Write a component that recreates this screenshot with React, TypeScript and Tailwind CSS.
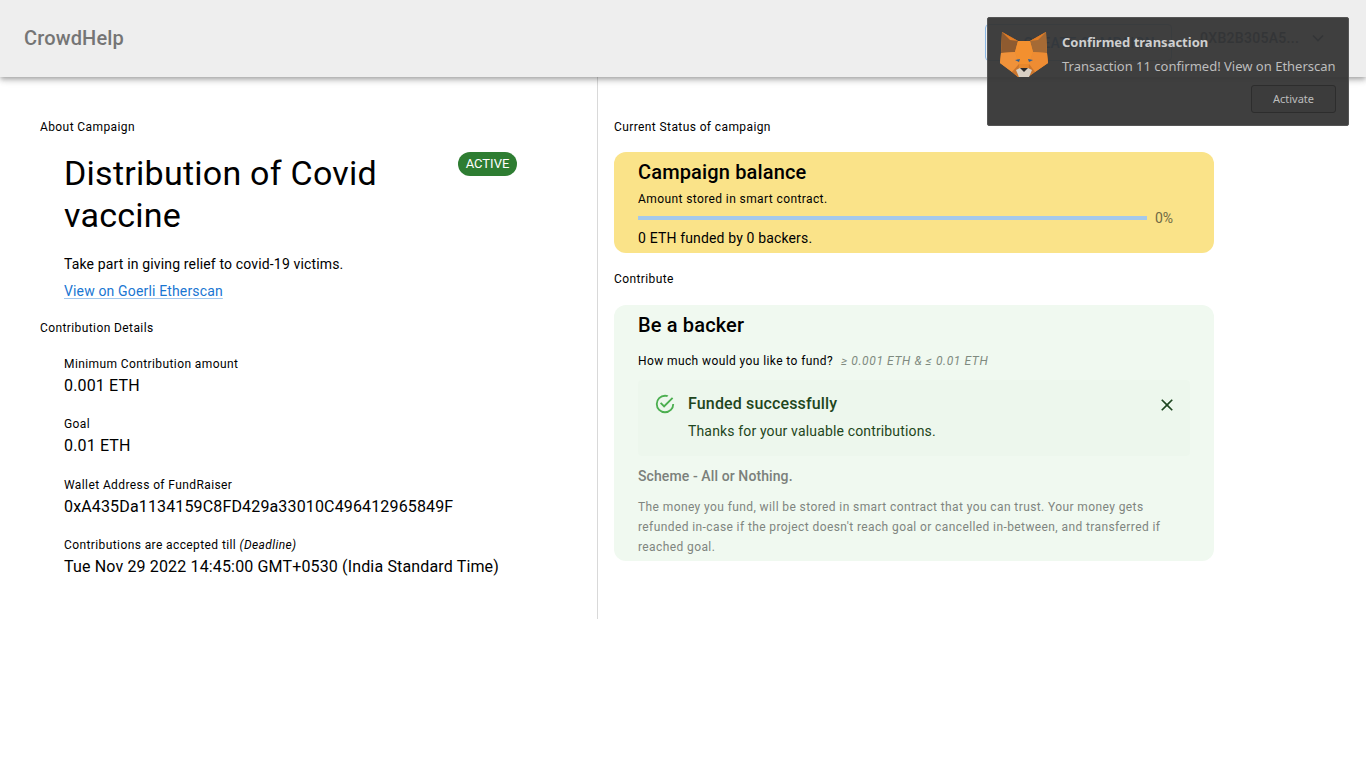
import React from "react";

const Fox = () => (
  <svg width="48" height="47" viewBox="0 0 48 47" className="block">
    <polygon points="2,1 18,10 30,10 46,1 47,22 48,32 35,41 28,46 18,46 12,41 0,32 1,22" fill="#e8882c" />
    <polygon points="2,1 18,10 15,21 1,22" fill="#8f5b30" />
    <polygon points="46,1 30,10 33,21 47,22" fill="#a56a35" />
    <polygon points="2,1 18,10 10,9" fill="#e27d25" />
    <polygon points="46,1 30,10 38,9" fill="#e27d25" />
    <polygon points="18,10 30,10 33,21 29,33 19,33 15,21" fill="#f3902f" />
    <polygon points="1,22 15,21 19,33 12,41 0,32" fill="#f0923a" />
    <polygon points="47,22 33,21 29,33 35,41 48,32" fill="#ee8c33" />
    <polygon points="12,41 19,33 18,46" fill="#c9752e" />
    <polygon points="35,41 29,33 28,46" fill="#c9752e" />
    <polygon points="16,39 20,37 28,37 32,39 29,46 19,46" fill="#d8cfc4" />
    <polygon points="20,37 28,37 24,41" fill="#2a2a2a" />
    <polygon points="15,29 20,28 19,31" fill="#2f5f93" />
    <polygon points="33,29 28,28 29,31" fill="#2f5f93" />
  </svg>
);

function Field({ label, value }: { label: React.ReactNode; value: string }) {
  return (
    <div className="h-[60.5px] pt-[5px]">
      <div className="text-xs leading-[20px] tracking-[0.4px] text-black">{label}</div>
      <div className="text-base leading-[24px] tracking-[0.15px] text-black">{value}</div>
    </div>
  );
}

export default function App() {
  return (
    <div className="relative min-h-[768px] bg-white text-black font-['Roboto',sans-serif]">
      <header className="relative z-10 flex h-[77px] items-center bg-[#eeeeee] pl-6 pr-[40px] shadow-[0_2px_4px_-1px_rgba(0,0,0,0.2),0_4px_5px_0_rgba(0,0,0,0.14),0_1px_10px_0_rgba(0,0,0,0.12)]">
        <div className="-mt-[2px] text-xl font-medium leading-[32px] tracking-[0.15px] text-[#757575]">CrowdHelp</div>
        <div className="ml-auto flex items-center">
          <div className="mt-[8px] flex h-[37px] w-[187px] shrink-0 items-center justify-end gap-2 rounded border border-[#8ab8e6] pr-4 text-sm font-medium tracking-[0.4px] text-[#1976d2]">
            <span className="text-lg leading-none">+</span>
            <span>CREATE CAMPAIGN</span>
          </div>
          <div className="-mt-[1px] ml-[28px] flex w-[126px] shrink-0 items-center justify-between whitespace-nowrap text-sm font-medium tracking-[0.3px] text-[#1d3a5c]">
            <span>0XB2B305A5...</span>
            <svg width="20" height="20" viewBox="0 0 24 24" fill="none" stroke="currentColor" strokeWidth="2" className="-mr-[2px] shrink-0"><path d="M6 9l6 6 6-6" /></svg>
          </div>
        </div>
      </header>

      <main className="flex items-start">
        <section className="h-[542px] w-[598px] border-r border-[#d9d9d9] pl-10 pt-[40px]">
          <div className="text-xs leading-[20px] tracking-[0.4px]">About Campaign</div>
          <div className="pl-6">
            <div className="mt-[15px] flex items-start">
              <h1 className="w-[394px] text-[34px] font-normal leading-[42px] tracking-[0.25px]">Distribution of Covid vaccine</h1>
              <span className="flex h-6 w-[59px] items-center justify-center rounded-full bg-[#2e7d32] text-[13px] text-white">ACTIVE</span>
            </div>
            <p className="mt-[17px] text-sm leading-[22px] tracking-[0.15px]">Take part in giving relief to covid-19 victims.</p>
            <a className="mt-[5px] block w-fit text-sm leading-[22px] tracking-[0.15px] text-[#1976d2] underline decoration-[#1976d2]/40 underline-offset-2">View on Goerli Etherscan</a>
          </div>
          <div className="mt-[16px] text-xs leading-[20px] tracking-[0.4px]">Contribution Details</div>
          <div className="mt-[10.6px] pl-6">
            <Field label="Minimum Contribution amount" value="0.001 ETH" />
            <Field label="Goal" value="0.01 ETH" />
            <Field label="Wallet Address of FundRaiser" value="0xA435Da1134159C8FD429a33010C496412965849F" />
            <Field label={<>Contributions are accepted till <i>(Deadline)</i></>} value="Tue Nov 29 2022 14:45:00 GMT+0530 (India Standard Time)" />
          </div>
        </section>

        <section className="pl-4 pt-[40px]">
          <div className="text-xs leading-[20px] tracking-[0.4px]">Current Status of campaign</div>
          <div className="mt-[15px] h-[101px] w-[600px] rounded-[12px] bg-[#fae389] px-6">
            <h2 className="h-[37px] text-xl font-medium leading-[40px] tracking-[0.15px]">Campaign balance</h2>
            <div className="text-xs leading-[20px] tracking-[0.4px]">Amount stored in smart contract.</div>
            <div className="flex h-[18px] items-center">
              <div className="h-1 w-[509px] bg-[#a5c9ea]" />
              <span className="ml-2 text-sm text-[#6f6a45]">0%</span>
            </div>
            <div className="mt-[1px] text-sm leading-[20px] tracking-[0.15px]">0 ETH funded by 0 backers.</div>
          </div>
          <div className="mt-[16px] text-xs leading-[20px] tracking-[0.4px]">Contribute</div>
          <div className="mt-[16px] h-[256px] w-[600px] overflow-hidden rounded-[12px] bg-[#f0f9f0] px-6">
            <h2 className="text-xl font-medium leading-[40px] tracking-[0.15px]">Be a backer</h2>
            <div className="mt-[6px] flex items-center text-xs leading-[20px] tracking-[0.4px]">
              How much would you like to fund?
              <i className="ml-2 tracking-[0.6px] text-[#7f8a7f]">≥ 0.001 ETH &amp; ≤ 0.01 ETH</i>
            </div>
            <div className="mt-[9px] flex h-[76px] w-[552px] rounded bg-[#edf7ed] pl-4 pr-[13px] text-[#1e4620]">
              <svg width="22" height="22" viewBox="0 0 24 24" className="mt-[13px] text-[#4caf50]" fill="currentColor">
                <path d="M20 12a8 8 0 0 1-8 8 8 8 0 0 1-8-8 8 8 0 0 1 8-8c.76 0 1.5.11 2.2.31l1.57-1.57A9.9 9.9 0 0 0 12 2 10 10 0 0 0 2 12a10 10 0 0 0 10 10 10 10 0 0 0 10-10M7.91 10.08 6.5 11.5 11 16 21 6l-1.41-1.42L11 13.17z" />
              </svg>
              <div className="ml-[12px] flex-1">
                <div className="mt-[13px] text-base font-medium leading-[22px] tracking-[0.15px]">Funded successfully</div>
                <div className="mt-[5px] text-sm leading-[22px] tracking-[0.15px]">Thanks for your valuable contributions.</div>
              </div>
              <svg width="20" height="20" viewBox="0 0 24 24" className="mt-[15px]" fill="currentColor">
                <path d="M19 6.41 17.59 5 12 10.59 6.41 5 5 6.41 10.59 12 5 17.59 6.41 19 12 13.41 17.59 19 19 17.59 13.41 12z" />
              </svg>
            </div>
            <div className="mt-[9px] text-sm font-medium leading-[22px] tracking-[0.1px] text-[#7b807b]">Scheme - All or Nothing.</div>
            <p className="mt-[10px] w-[540px] text-xs leading-[20px] tracking-[0.4px] text-[#7f857f]">
              The money you fund, will be stored in smart contract that you can trust. Your money gets refunded in-case if the project doesn't reach goal or cancelled in-between, and transferred if reached goal.
            </p>
          </div>
        </section>
      </main>

      <div className="absolute left-[987px] top-[17px] z-20 h-[109px] w-[362px] rounded-[2px] border border-[#555555] bg-[#353535]/95 font-['Noto_Sans',sans-serif]">
        <div className="absolute left-[12px] top-[13px]"><Fox /></div>
        <div className="absolute left-[74px] top-[14px] whitespace-nowrap text-[13px] font-bold leading-[20px] text-[#cfcfcf]">Confirmed transaction</div>
        <div className="absolute left-[74px] top-[38px] whitespace-nowrap text-[13px] leading-[20px] text-[#bdbdbd]">Transaction 11 confirmed! View on Etherscan</div>
        <div className="absolute right-[12px] top-[67px] flex h-[28px] w-[85px] items-center justify-center rounded-[3px] border border-[#2d2d2d] bg-[#3c3c3c] text-[11px] text-[#bdbdbd]">Activate</div>
      </div>
    </div>
  );
}
